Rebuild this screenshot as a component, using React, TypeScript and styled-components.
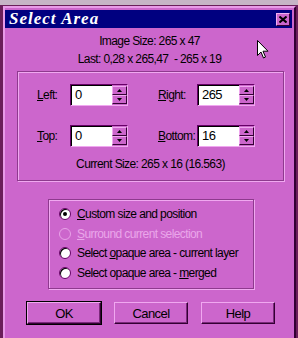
import styled, { createGlobalStyle, css } from 'styled-components';

const GlobalStyle = createGlobalStyle`
	html, body {
		margin: 0;
		padding: 0;
		width: 298px;
		height: 338px;
		overflow: hidden;
		background: #5a1a4a;
	}
	body {
		font-family: 'Liberation Sans', Arial, sans-serif;
	}
`;

const uiFont = css`
	font-family: 'Liberation Sans', Arial, sans-serif;
	font-size: 12px;
	letter-spacing: -0.6px;
	white-space: nowrap;
	color: #000;
`;

const Backdrop = styled.div`
	position: relative;
	width: 298px;
	height: 338px;
	padding: 6px 2px 0 3px;
	box-sizing: border-box;
	background: linear-gradient(#c6b4c6 0 5px, #6a1e5a 5px);
`;

const Window = styled.div`
	width: 293px;
	height: 332px;
	box-sizing: border-box;
	background: #cc66cc;
	border-top: 2px solid #e89ae8;
	border-left: 2px solid #e89ae8;
	border-right: 2px solid #330033;
	border-bottom: 0;
	padding: 2px 2px 0 0;
	display: flex;
	flex-direction: column;
`;

const TitleBar = styled.div`
	height: 18px;
	background: #000080;
	display: flex;
	align-items: center;
	justify-content: space-between;
	padding: 0 2px 0 4px;
`;

const Title = styled.span`
	font-family: 'Liberation Serif', 'DejaVu Serif', serif;
	font-style: italic;
	font-weight: bold;
	font-size: 17px;
	letter-spacing: 1px;
	color: #fff;
	line-height: 18px;
`;

const CloseButton = styled.div`
	width: 14px;
	height: 13px;
	box-sizing: border-box;
	background: #cc66cc;
	border-top: 1px solid #f0b0f0;
	border-left: 1px solid #f0b0f0;
	border-right: 1px solid #330033;
	border-bottom: 1px solid #330033;
	display: flex;
	align-items: center;
	justify-content: center;
`;

const InfoLine = styled.div`
	${uiFont};
	text-align: center;
	line-height: 18px;
`;

const Info = styled.div`
	margin-top: 4px;
	margin-left: 2px;
`;

const GroupBox = styled.div<{ $left: number; $width: number }>`
	margin-left: ${(p) => p.$left}px;
	width: ${(p) => p.$width}px;
	box-sizing: border-box;
	border: 1px solid #8e3a8e;
	box-shadow: inset 1px 1px 0 #f0a8f0, 1px 1px 0 #f0a8f0;
`;

const SizeBox = styled(GroupBox)`
	margin-top: 3px;
	height: 110px;
	padding: 12px 0 0 19px;
`;

const FieldGrid = styled.div`
	display: grid;
	grid-template-columns: 33px 58px 30px 39px 58px;
	grid-auto-rows: 22px;
	row-gap: 19px;
	align-items: center;
`;

const Label = styled.span`
	${uiFont};
`;

const Field = styled.div`
	display: flex;
	height: 22px;
	box-sizing: border-box;
	border-top: 1px solid #660066;
	border-left: 1px solid #660066;
	border-right: 1px solid #f0a8f0;
	border-bottom: 1px solid #f0a8f0;
	box-shadow: inset 1px 1px 0 #000;
	background: #fff;
`;

const FieldText = styled.div`
	${uiFont};
	flex: 1;
	padding: 2px 0 0 4px;
	font-size: 13px;
`;

const Spinner = styled.div`
	width: 15px;
	display: flex;
	flex-direction: column;
	padding: 1px 0;
	background: #cc66cc;
`;

const SpinButton = styled.div`
	flex: 1;
	box-sizing: border-box;
	background: #cc66cc;
	border-top: 1px solid #f0a8f0;
	border-left: 1px solid #f0a8f0;
	border-right: 1px solid #330033;
	border-bottom: 1px solid #330033;
	display: flex;
	align-items: center;
	justify-content: center;
`;

const CurrentSize = styled(InfoLine)`
	margin: 10px 0 0 -19px;
	line-height: 14px;
`;

const ModeBox = styled(GroupBox)`
	margin-top: 18px;
	height: 90px;
	padding: 4px 0 0 10px;
`;

const RadioRow = styled.div<{ $disabled?: boolean }>`
	${uiFont};
	height: 19.7px;
	display: flex;
	align-items: center;
	gap: 6px;
	color: ${(p) => (p.$disabled ? '#eaa6ea' : '#000')};
`;

const RadioDot = styled.span<{ $checked?: boolean; $disabled?: boolean }>`
	width: 12px;
	height: 12px;
	box-sizing: border-box;
	border-radius: 50%;
	background: ${(p) => (p.$disabled ? 'transparent' : '#fff')};
	border: 1px solid ${(p) => (p.$disabled ? '#e8a2e8' : '#660066')};
	box-shadow: ${(p) => (p.$disabled ? 'none' : 'inset 1px 1px 0 #000')};
	display: flex;
	align-items: center;
	justify-content: center;
	&::after {
		content: '';
		display: ${(p) => (p.$checked ? 'block' : 'none')};
		width: 4px;
		height: 4px;
		border-radius: 50%;
		background: #000;
	}
`;

const ButtonRow = styled.div`
	display: flex;
	gap: 13px;
	margin: 13px 0 0 22px;
`;

const Button = styled.div<{ $default?: boolean }>`
	${uiFont};
	font-size: 13px;
	width: 74px;
	height: 22px;
	box-sizing: border-box;
	display: flex;
	align-items: center;
	justify-content: center;
	background: #cc66cc;
	border-top: 1px solid #f0a8f0;
	border-left: 1px solid #f0a8f0;
	border-right: 1px solid #330033;
	border-bottom: 1px solid #330033;
	box-shadow: ${(p) =>
		p.$default ? '0 0 0 1px #000, inset -1px -1px 0 #7a2a7a' : 'inset -1px -1px 0 #7a2a7a'};
`;

const Cursor = styled.svg`
	position: absolute;
	left: 257px;
	top: 40px;
`;

const Arrow = ({ up }: { up?: boolean }) => (
	<svg width='5' height='3' viewBox='0 0 5 3'>
		<path d={up ? 'M2.5 0 L5 3 L0 3 Z' : 'M0 0 L5 0 L2.5 3 Z'} fill='#000' />
	</svg>
);

const SpinField = ({ value }: { value: string }) => (
	<Field>
		<FieldText>{value}</FieldText>
		<Spinner>
			<SpinButton>
				<Arrow up />
			</SpinButton>
			<SpinButton>
				<Arrow />
			</SpinButton>
		</Spinner>
	</Field>
);

const App = () => {
	return (
		<Backdrop>
			<GlobalStyle />
			<Window>
				<TitleBar>
					<Title>Select Area</Title>
					<CloseButton>
						<svg width='8' height='7' viewBox='0 0 8 7'>
							<path d='M0.5 0.5 L7.5 6.5 M7.5 0.5 L0.5 6.5' stroke='#000' strokeWidth='2' />
						</svg>
					</CloseButton>
				</TitleBar>
				<Info>
					<InfoLine>Image Size: 265 x 47</InfoLine>
					<InfoLine>Last: 0,28 x 265,47&nbsp; - 265 x 19</InfoLine>
				</Info>
				<SizeBox $left={12} $width={267}>
					<FieldGrid>
						<Label>
							<u>L</u>eft:
						</Label>
						<SpinField value='0' />
						<span />
						<Label>
							<u>R</u>ight:
						</Label>
						<SpinField value='265' />
						<Label>
							<u>T</u>op:
						</Label>
						<SpinField value='0' />
						<span />
						<Label>
							<u>B</u>ottom:
						</Label>
						<SpinField value='16' />
					</FieldGrid>
					<CurrentSize>Current Size: 265 x 16 (16.563)</CurrentSize>
				</SizeBox>
				<ModeBox $left={43} $width={206}>
					<RadioRow>
						<RadioDot $checked />
						<span>
							<u>C</u>ustom size and position
						</span>
					</RadioRow>
					<RadioRow $disabled>
						<RadioDot $disabled />
						<span>
							<u>S</u>urround current selection
						</span>
					</RadioRow>
					<RadioRow>
						<RadioDot />
						<span>
							Select <u>o</u>paque area - current layer
						</span>
					</RadioRow>
					<RadioRow>
						<RadioDot />
						<span>
							Select opaque area - <u>m</u>erged
						</span>
					</RadioRow>
				</ModeBox>
				<ButtonRow>
					<Button $default>OK</Button>
					<Button>Cancel</Button>
					<Button>Help</Button>
				</ButtonRow>
			</Window>
			<Cursor width='12' height='19' viewBox='0 0 12 19'>
				<path d='M0.5 0.5 L0.5 15.5 L4 12 L6.5 18 L8.5 17 L6 11.2 L11 11.2 Z' fill='#fff' stroke='#000' strokeWidth='1' />
			</Cursor>
		</Backdrop>
	);
};

export default App;
